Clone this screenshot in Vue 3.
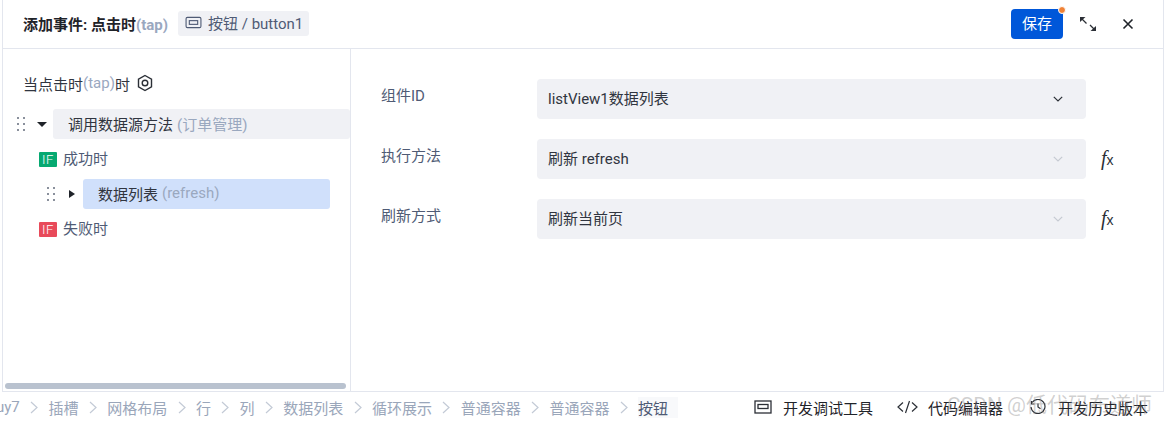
<template>
  <div class="page">
    <section class="dialog">
      <header class="head">
        <span class="title">添加事件: 点击时<em>(tap)</em></span>
        <span class="comp-tag">
          <svg class="tag-icon" viewBox="0 0 18 14" width="17" height="13" fill="none" stroke="currentColor" stroke-width="1.2">
            <rect x="1" y="1.5" width="16" height="11" rx="1.5" />
            <rect x="4.5" y="5" width="9" height="4" />
          </svg>
          按钮 / button1
        </span>
        <div class="head-actions">
          <button type="button" class="save-btn">保存<i class="dot"></i></button>
          <svg class="act expand" viewBox="0 0 18 16" width="18" height="16" fill="none" stroke="#2b2f36" stroke-width="1.3">
            <path d="M1 1h5.500L1 6z" fill="#2b2f36" stroke="none" />
            <path d="M2.500 2.500l5 5M11 9l4.500 4.500" />
            <path d="M17 15h-5.500L17 10z" fill="#2b2f36" stroke="none" />
          </svg>
          <svg class="act" viewBox="0 0 12 12" width="12" height="12" fill="none" stroke="#1f2329" stroke-width="1.6">
            <path d="M1.500 1.500l9 9M10.500 1.500l-9 9" />
          </svg>
        </div>
      </header>

      <div class="body">
        <aside class="tree">
          <div class="tree-title">
            当点击时<em>(tap)</em>时
            <svg class="hex" viewBox="0 0 18 18" width="18" height="18" fill="none" stroke="#2b2f36" stroke-width="1.400">
              <path d="M9 1.500l6.500 3.750v7.500L9 16.500l-6.500-3.750v-7.500z" />
              <circle cx="9" cy="9" r="2.800" />
            </svg>
          </div>

          <div class="node level-0">
            <span class="grip"><i v-for="n in 6" :key="n"></i></span>
            <span class="caret down"></span>
            <div class="node-box grey">调用数据源方法 <em>(订单管理)</em></div>
          </div>
          <div class="branch"><span class="if ok">IF</span><span class="branch-text">成功时</span></div>
          <div class="node level-1">
            <span class="grip"><i v-for="n in 6" :key="n"></i></span>
            <span class="caret right"></span>
            <div class="node-box blue">数据列表 <em>(refresh)</em></div>
          </div>
          <div class="branch"><span class="if fail">IF</span><span class="branch-text">失败时</span></div>

          <div class="scrollbar"></div>
        </aside>

        <div class="form">
          <div v-for="row in rows" :key="row.label" class="form-row">
            <label class="form-label">{{ row.label }}</label>
            <div class="select">
              <span class="select-text">{{ row.value }}</span>
              <svg viewBox="0 0 10 6" width="10" height="6" fill="none" :stroke="row.fx ? '#c6cad2' : '#2b2f36'" stroke-width="1.200">
                <path d="M.8.8L5 5l4.200-4.200" />
              </svg>
            </div>
            <span v-if="row.fx" class="fx">f<small>x</small></span>
          </div>
        </div>
      </div>
    </section>

    <footer class="bar">
      <nav class="crumbs">
        <template v-for="(c, i) in crumbs" :key="i">
          <span class="crumb" :class="{ last: i === crumbs.length - 1 }">{{ c }}</span>
          <svg v-if="i < crumbs.length - 1" class="sep" viewBox="0 0 8 13" width="8" height="13" fill="none" stroke="#c3cad6" stroke-width="1.200">
            <path d="M1 1l6 5.500L1 12" />
          </svg>
        </template>
      </nav>
      <div class="tools">
        <span class="tool t1">
          <svg viewBox="0 0 18 14" width="18" height="14" fill="none" stroke="#2b2f36" stroke-width="1.300">
            <rect x="1" y="1" width="16" height="12" />
            <rect x="4" y="4.500" width="10" height="4" />
          </svg>
          开发调试工具
        </span>
        <span class="tool t2">
          <svg viewBox="0 0 21 14" width="21" height="14" fill="none" stroke="#2b2f36" stroke-width="1.200">
            <path d="M6 2.500L1 7l5 4.500M15 2.500L20 7l-5 4.500M12.500 1L8.500 13" />
          </svg>
          代码编辑器
        </span>
        <span class="tool t3">
          <svg viewBox="0 0 16 16" width="16" height="16" fill="none" stroke="#2b2f36" stroke-width="1.200">
            <path d="M2.200 3.500A7 7 0 1 1 1 8M1.500 2v3h3M8 4.500V8l2.500 1.800" />
          </svg>
          开发历史版本
        </span>
      </div>
      <span class="watermark">CSDN @低代码布道师</span>
    </footer>
  </div>
</template>

<script setup>
const rows = [
  { label: '组件ID', value: 'listView1数据列表', fx: false },
  { label: '执行方法', value: '刷新 refresh', fx: true },
  { label: '刷新方式', value: '刷新当前页', fx: true }
]

const crumbs = ['uy7', '插槽', '网格布局', '行', '列', '数据列表', '循环展示', '普通容器', '普通容器', '按钮']
</script>

<style>
html,
body {
  margin: 0;
  background: #fff;
}
</style>

<style scoped>
.page {
  position: relative;
  width: 1164px;
  height: 425px;
  overflow: hidden;
  background: #fff;
  font-family: Roboto, "Noto Sans CJK SC", sans-serif;
  font-size: 15px;
  color: #303540;
}

em {
  font-style: normal;
  color: #9aa8bf;
}

.dialog {
  height: 392px;
  margin-left: 2px;
  box-sizing: border-box;
  border-left: 1px solid #e3e6ee;
  border-right: 1px solid #e3e6ee;
  border-bottom: 1px solid #e3e6ee;
  display: flex;
  flex-direction: column;
}

.head {
  height: 49px;
  flex: none;
  box-sizing: border-box;
  border-bottom: 1px solid #e3e6ee;
  display: flex;
  align-items: center;
  padding-left: 20px;
}

.title {
  margin-top: -2px;
  font-weight: 700;
  color: #1f2329;
}

.comp-tag {
  display: flex;
  align-items: center;
  gap: 6px;
  height: 25px;
  box-sizing: border-box;
  margin: -1px 0 0 10px;
  padding: 0 6px 2px 7px;
  border-radius: 3px;
  background: #f0f1f5;
  color: #4f5b75;
}

.head-actions {
  margin-left: auto;
  display: flex;
  align-items: center;
  padding-right: 29px;
}

.save-btn {
  position: relative;
  width: 52px;
  height: 30px;
  padding: 0 0 3px;
  border: none;
  border-radius: 4px;
  background: #0057d9;
  color: #fff;
  font: inherit;
}

.dot {
  position: absolute;
  top: -3px;
  right: -3px;
  width: 6px;
  height: 6px;
  border-radius: 50%;
  background: #f08236;
  border: 1px solid #fff;
}

.act.expand {
  margin: 0 25px 0 16px;
}

.body {
  flex: 1;
  display: flex;
  min-height: 0;
}

.tree {
  position: relative;
  width: 348px;
  flex: none;
  box-sizing: border-box;
  border-right: 1px solid #e3e6ee;
  padding-top: 22px;
}

.tree-title {
  display: flex;
  align-items: center;
  height: 24px;
  padding-left: 20px;
  margin-bottom: 14px;
  color: #303540;
}

.hex {
  margin-left: 6px;
}

.node {
  display: flex;
  align-items: center;
  height: 30px;
}

.level-0 {
  padding-left: 14px;
}

.level-1 {
  padding-left: 44px;
  padding-right: 20px;
}

.grip {
  display: grid;
  grid-template-columns: 2px 2px;
  gap: 4px 4px;
  width: 8px;
  flex: none;
}

.grip i {
  width: 2px;
  height: 2px;
  background: #8a909c;
}

.caret {
  width: 0;
  height: 0;
  flex: none;
}

.caret.down {
  margin: 0 6px 0 12px;
  border-left: 5px solid transparent;
  border-right: 5px solid transparent;
  border-top: 5px solid #1f2329;
}

.caret.right {
  margin: 0 8px 0 14px;
  border-top: 4px solid transparent;
  border-bottom: 4px solid transparent;
  border-left: 6px solid #1f2329;
}

.node-box {
  flex: 1;
  height: 100%;
  box-sizing: border-box;
  display: flex;
  align-items: center;
  gap: 4px;
  padding: 0 0 2px 15px;
  border-radius: 3px;
}

.node-box.grey {
  background: #f0f1f5;
}

.node-box.blue {
  background: #d0e0fb;
}

.branch {
  display: flex;
  align-items: center;
  height: 40px;
  padding-left: 36px;
  color: #4f5b75;
}

.branch-text {
  margin-top: -4px;
}

.if {
  width: 18px;
  height: 15px;
  margin-right: 6px;
  border-radius: 1px;
  color: #fff;
  font-size: 13px;
  font-weight: 300;
  letter-spacing: 0.5px;
  line-height: 15px;
  text-align: center;
}

.if.ok {
  background: #06a971;
}

.if.fail {
  background: #e84a5a;
}

.scrollbar {
  position: absolute;
  left: 2px;
  right: 4px;
  bottom: 2px;
  height: 6px;
  border-radius: 3px;
  background: #b9c2cf;
}

.form {
  flex: 1;
  padding: 30px 0 0 30px;
}

.form-row {
  display: flex;
  align-items: flex-start;
  height: 40px;
  margin-bottom: 20px;
}

.form-label {
  width: 156px;
  flex: none;
  line-height: 34px;
  color: #4f5b75;
}

.select {
  width: 549px;
  height: 40px;
  flex: none;
  box-sizing: border-box;
  display: flex;
  align-items: center;
  justify-content: space-between;
  padding: 0 23px 0 11px;
  border-radius: 4px;
  background: #f0f1f5;
  color: #303540;
}

.select-text {
  margin-top: -4px;
}

.fx {
  margin-left: 15px;
  line-height: 38px;
  font-family: "Liberation Serif", serif;
  font-style: italic;
  font-size: 20px;
  color: #2b2f36;
}

.fx small {
  font-family: "Liberation Sans", sans-serif;
  font-size: 14px;
  font-style: normal;
}

.bar {
  position: relative;
  height: 33px;
  box-sizing: border-box;
  padding-bottom: 3px;
  display: flex;
  align-items: center;
  justify-content: space-between;
}

.crumbs {
  display: flex;
  align-items: center;
  gap: 10.350px;
  margin-left: -4px;
  color: #9aa6ba;
}

.crumb.last {
  color: #4f5b75;
  padding-right: 10px;
  margin-right: -10px;
  background: #f8f9fb;
}

.tools {
  display: flex;
  align-items: center;
  padding-right: 16px;
  color: #1f2329;
}

.tool {
  display: flex;
  align-items: center;
}

.t1 svg {
  margin-right: 11px;
}

.t2 {
  margin-left: 24px;
}

.t2 svg {
  margin-right: 10px;
}

.t3 {
  margin-left: 27px;
}

.t3 svg {
  margin-right: 12px;
}

.watermark {
  position: absolute;
  left: 947px;
  top: 0;
  font-size: 21px;
  line-height: 27px;
  color: rgba(120, 120, 120, 0.35);
  white-space: nowrap;
  pointer-events: none;
}
</style>
